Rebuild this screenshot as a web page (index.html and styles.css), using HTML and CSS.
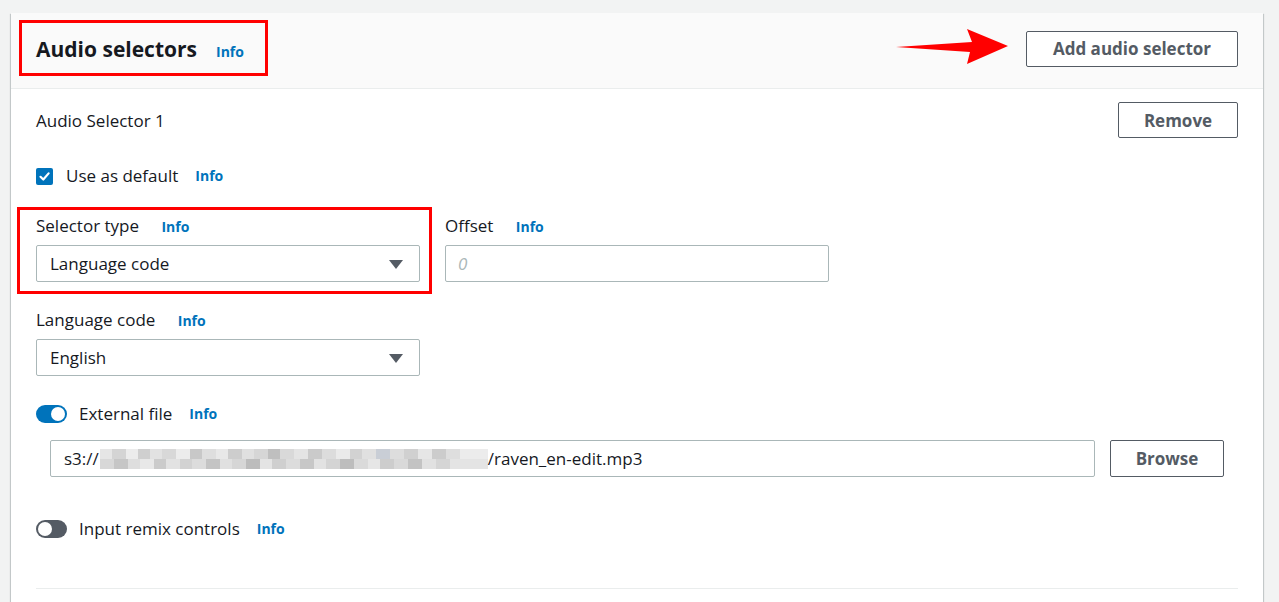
FILE: index.html
```html
<!DOCTYPE html>
<html lang="en">
<head>
  <meta charset="UTF-8" />
  <title>Audio selectors</title>
  <link rel="stylesheet" href="styles.css">
</head>
<body>
  <div class="container">
    <div class="panel-header">
      <h2>Audio selectors <a class="info" href="#">Info</a></h2>
      <button class="btn">Add audio selector</button>
    </div>

    <div class="panel-body">
      <div class="selector-head">
        <span>Audio Selector 1</span>
        <button class="btn">Remove</button>
      </div>

      <label class="check-row">
        <span class="checkbox">
          <svg width="13" height="13" viewBox="0 0 13 13"><path d="M2.5 6.8 L5.3 9.5 L10.6 3.4" fill="none" stroke="#fff" stroke-width="2.2" stroke-linecap="round" stroke-linejoin="round"/></svg>
        </span>
        Use as default <a class="info" href="#">Info</a>
      </label>

      <div class="field-row">
        <div class="field">
          <div class="field-label">Selector type <a class="info" href="#">Info</a></div>
          <div class="select">Language code<span class="caret"></span></div>
        </div>
        <div class="field">
          <div class="field-label">Offset <a class="info" href="#">Info</a></div>
          <div class="input placeholder">0</div>
        </div>
      </div>

      <div class="field-row">
        <div class="field">
          <div class="field-label">Language code <a class="info" href="#">Info</a></div>
          <div class="select">English<span class="caret"></span></div>
        </div>
      </div>

      <div class="toggle-row">
        <span class="toggle on"></span>
        External file <a class="info" href="#">Info</a>
      </div>

      <div class="file-row">
        <div class="input file-input">s3://<span class="blurred"></span>/raven_en-edit.mp3</div>
        <button class="btn browse">Browse</button>
      </div>

      <div class="toggle-row remix">
        <span class="toggle"></span>
        Input remix controls <a class="info" href="#">Info</a>
      </div>

      <div class="divider"></div>
    </div>

    <!-- annotations -->
    <div class="mark mark-title"></div>
    <div class="mark mark-type"></div>
    <svg class="arrow" width="115" height="38" viewBox="0 0 115 38">
      <polygon points="1,19 77,14 72,1 113,18 72,36 75,24" fill="#f00"/>
    </svg>
  </div>
</body>
</html>
```
FILE: styles.css
```css
html, body {
  margin: 0;
  height: 100%;
  overflow: hidden;
}

body {
  font-family: "Open Sans", "Liberation Sans", Arial, sans-serif;
  background: #f2f3f3;
  color: #16191f;
  font-size: 17px;
}

.container {
  position: relative;
  margin: 13px 0 0 11px;
  width: 1252px;
  height: 620px;
  background: white;
  box-shadow: 0 1px 1px 0 rgba(0,28,36,0.3), 1px 1px 1px 0 rgba(0,28,36,0.15), -1px 1px 1px 0 rgba(0,28,36,0.15);
}

.panel-header {
  display: flex;
  justify-content: space-between;
  align-items: center;
  height: 75px;
  padding: 0 25px;
  background: #fafafa;
  border-bottom: 1px solid #eaeded;
}

.panel-header h2 {
  margin: 0;
  font-size: 21px;
  font-weight: bold;
  display: flex;
  align-items: baseline;
  margin-top: -4px;
}

.panel-header h2 .info {
  margin-left: 19px;
}

.panel-header .btn {
  margin-top: -4px;
  width: 212px;
}

.info {
  color: #0073bb;
  font-size: 14px;
  font-weight: bold;
  text-decoration: none;
  margin-left: 17px;
}

.btn {
  height: 36px;
  padding: 0 12px;
  background: white;
  border: 1px solid #545b64;
  border-radius: 2px;
  color: #545b64;
  font-family: inherit;
  font-size: 17px;
  font-weight: bold;
}

.panel-body {
  padding: 13px 25px 0;
}

.selector-head {
  display: flex;
  justify-content: space-between;
  align-items: center;
}

.selector-head .btn {
  width: 120px;
}

.check-row, .toggle-row {
  display: flex;
  align-items: center;
  height: 22px;
  line-height: 22px;
}

.check-row {
  margin-top: 27px;
}

.checkbox {
  width: 17px;
  height: 17px;
  background: #0073bb;
  border-radius: 2px;
  margin-right: 13px;
  display: flex;
  align-items: center;
  justify-content: center;
}

.field-row {
  display: flex;
  gap: 25px;
  margin-top: 27px;
}

.check-row + .field-row {
  margin-top: 28px;
}

.field {
  width: 384px;
}

.field-label {
  height: 22px;
  line-height: 22px;
  margin-bottom: 8px;
}

.field-label .info {
  margin-left: 18px;
}

.select, .input {
  position: relative;
  box-sizing: border-box;
  height: 37px;
  line-height: 35px;
  padding: 0 13px;
  border: 1px solid #aab7b8;
  border-radius: 2px;
  background: white;
}

.caret {
  position: absolute;
  right: 16px;
  top: 14px;
  width: 0;
  height: 0;
  border-left: 7px solid transparent;
  border-right: 7px solid transparent;
  border-top: 9px solid #545b64;
}

.placeholder {
  color: #aab7b8;
  font-style: italic;
  padding-left: 12px;
}

.toggle-row {
  margin-top: 27px;
}

.toggle {
  position: relative;
  width: 31px;
  height: 18px;
  border-radius: 9px;
  background: #545b64;
  margin-right: 12px;
}

.toggle::after {
  content: "";
  position: absolute;
  top: 2px;
  left: 2px;
  width: 14px;
  height: 14px;
  border-radius: 50%;
  background: white;
}

.toggle.on {
  background: #0073bb;
}

.toggle.on::after {
  left: 15px;
}

.file-row {
  display: flex;
  gap: 15px;
  margin: 15px 14px 0;
}

.file-input {
  flex: 1;
  display: flex;
  align-items: center;
}

.blurred {
  display: inline-block;
  margin-left: 1px;
  width: 388px;
  height: 20px;
  background:
    linear-gradient(90deg, #e6e6e6 0 12px, #d4d4d4 12px 26px, #ececec 26px 38px, #cfcfcf 38px 50px, #e2e2e2 50px 62px, #d8d8d8 62px 76px, #ececec 76px 90px, #c8c8c8 90px 102px, #dedede 102px 116px, #e8e8e8 116px 128px, #cdcdcd 128px 142px, #e0e0e0 142px 154px, #d6d6d6 154px 168px, #bfbfbf 168px 180px, #d9d9d9 180px 194px, #e4e4e4 194px 208px, #cacaca 208px 222px, #dcdcdc 222px 236px, #eaeaea 236px 250px, #d2d2d2 250px 262px, #e0e0e0 262px 276px, #c9ced6 276px 290px, #dddddd 290px 304px, #d0d0d0 304px 318px, #e6e6e6 318px 332px, #cccccc 332px 346px, #dedede 346px 360px, #ececec 360px 388px) top / 100% 50% no-repeat,
    linear-gradient(90deg, #d8d8d8 0 14px, #c6c6c6 14px 28px, #dedede 28px 40px, #e8e8e8 40px 54px, #cbcbcb 54px 66px, #e2e2e2 66px 80px, #d2d2d2 80px 92px, #dcdcdc 92px 106px, #c4c4c4 106px 120px, #e0e0e0 120px 132px, #d6d6d6 132px 146px, #bcbcbc 146px 160px, #e4e4e4 160px 172px, #cfcfcf 172px 186px, #dcdcdc 186px 200px, #c7c7c7 200px 214px, #e2e2e2 214px 226px, #d4d4d4 226px 240px, #bdbdbd 240px 254px, #dadada 254px 268px, #e6e6e6 268px 280px, #cdcdcd 280px 294px, #d9d9d9 294px 308px, #c3c3c3 308px 322px, #e1e1e1 322px 336px, #d5d5d5 336px 350px, #e4e4e4 350px 388px) bottom / 100% 50% no-repeat;
}

.browse {
  width: 114px;
  height: 37px;
}

.toggle-row.remix {
  margin-top: 41px;
}

.divider {
  margin-top: 48px;
  border-top: 1px solid #eaeded;
}

/* annotations */
.mark {
  position: absolute;
  box-sizing: border-box;
  border: 3px solid #f00;
}

.mark-title {
  left: 8px;
  top: 7px;
  width: 249px;
  height: 56px;
}

.mark-type {
  left: 6px;
  top: 194px;
  width: 415px;
  height: 87px;
}

.arrow {
  position: absolute;
  left: 884px;
  top: 15px;
}
```
